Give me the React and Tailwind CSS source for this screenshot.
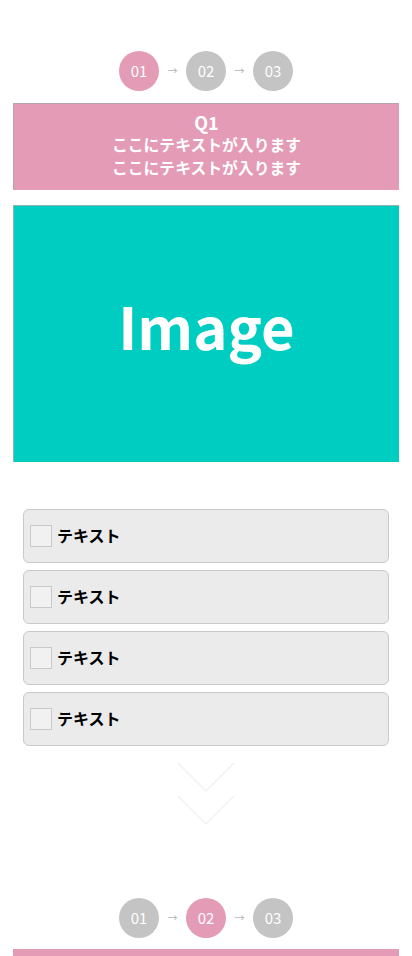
import React from "react";

const font = { fontFamily: '"Noto Sans CJK JP", "Noto Sans", sans-serif' };

function Stepper({ active }) {
  const items = ["01", "02", "03"];
  return (
    <div className="flex items-center justify-center">
      {items.map((t, i) => (
        <React.Fragment key={t}>
          {i > 0 && (
            <span className="w-[27px] text-center text-[10px] leading-none text-[#b5b5b5]">→</span>
          )}
          <div
            className={
              "flex h-[40px] w-[40px] items-center justify-center rounded-full text-[15px] font-normal text-white " +
              (i === active ? "bg-[#e49bb5]" : "bg-[#c4c4c4]")
            }
          >
            {t}
          </div>
        </React.Fragment>
      ))}
    </div>
  );
}

function Option() {
  return (
    <div className="flex h-[54px] items-center rounded-[6px] border border-[#c9c9c9] bg-[#ebebeb] pl-[6px]">
      <div className="h-[22px] w-[22px] border border-[#c9c9c9] bg-[#f1f1f1]" />
      <span className="mb-[3px] ml-[5px] text-[16px] font-bold leading-none text-black">テキスト</span>
    </div>
  );
}

export default function App() {
  return (
    <div className="min-h-[956px] w-[412px] overflow-hidden bg-white" style={font}>
      <div className="pt-[51px]">
        <Stepper active={0} />
      </div>
      <div className="mx-[13px] mt-[12px] flex h-[87px] flex-col items-center justify-center border-l border-t border-[#b9a3ab] bg-[#e49bb5] pb-[4px] text-white">
        <div className="text-[18px] font-bold leading-[22px]">Q1</div>
        <div className="text-[15.8px] font-bold leading-[23px]">ここにテキストが入ります</div>
        <div className="text-[15.8px] font-bold leading-[23px]">ここにテキストが入ります</div>
      </div>
      <div className="mx-[13px] mt-[15px] flex h-[257px] items-center justify-center border-l border-t border-[#8fb5b2] bg-[#00cdc1] pb-[18px]">
        <span className="text-[58px] font-bold leading-none text-white">
          Image
        </span>
      </div>
      <div className="mx-[23px] mt-[47px] flex flex-col gap-[7px]">
        <Option />
        <Option />
        <Option />
        <Option />
      </div>
      <div className="mt-[16px] flex justify-center">
        <svg width="60" height="64" viewBox="0 0 60 64" fill="none">
          <polyline points="2,1 30,29 58,1" stroke="#f2f2f2" strokeWidth="1.5" />
          <polyline points="2,34 30,62 58,34" stroke="#f2f2f2" strokeWidth="1.5" />
        </svg>
      </div>
      <div className="mt-[72px]">
        <Stepper active={1} />
      </div>
      <div className="mx-[13px] mt-[11px] h-[20px] bg-[#e49bb5]" />
    </div>
  );
}
